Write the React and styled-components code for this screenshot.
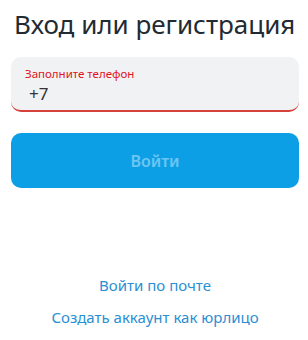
import React from 'react'
import styled, { createGlobalStyle } from 'styled-components'

const Global = createGlobalStyle`
  html, body { margin: 0; padding: 0; background: #ffffff; }
  body { font-family: "Noto Sans", "Open Sans", Arial, sans-serif; }
`

const Page = styled.div`
  display: flex;
  flex-direction: column;
  padding: 0 9px 0 11px;
  height: 340px;
  box-sizing: border-box;
`

const Title = styled.h1`
  margin: 7px 0 0 3px;
  font-size: 26px;
  font-weight: 400;
  line-height: 34px;
  color: #222b33;
  white-space: nowrap;
`

const Field = styled.div`
  margin-top: 16px;
  height: 55px;
  box-sizing: border-box;
  background: #f1f2f3;
  border-radius: 10px;
  border-bottom: 2px solid #d6413b;
  padding: 10px 14px 0;
  display: flex;
  flex-direction: column;
`

const Label = styled.span`
  font-size: 11.5px;
  line-height: 14px;
  color: #e0141e;
`

const Value = styled.span`
  margin: 2px 0 0 4px;
  font-size: 17px;
  line-height: 22px;
  color: #333;
`

const Button = styled.button`
  margin-top: 21px;
  height: 55px;
  border: none;
  border-radius: 10px;
  background: #0d9fe6;
  color: #6cc6f2;
  font-family: inherit;
  font-size: 16px;
  font-weight: 600;
`

const Links = styled.div`
  margin-top: 87px;
  display: flex;
  flex-direction: column;
  align-items: center;
  gap: 11px;
`

const Link = styled.a`
  font-size: 15px;
  line-height: 21px;
  color: #2a8fd3;
  text-decoration: none;
`

export default function App() {
  return (
    <>
      <Global />
      <Page>
        <Title>Вход или регистрация</Title>
        <Field>
          <Label>Заполните телефон</Label>
          <Value>+7</Value>
        </Field>
        <Button>Войти</Button>
        <Links>
          <Link>Войти по почте</Link>
          <Link>Создать аккаунт как юрлицо</Link>
        </Links>
      </Page>
    </>
  )
}
